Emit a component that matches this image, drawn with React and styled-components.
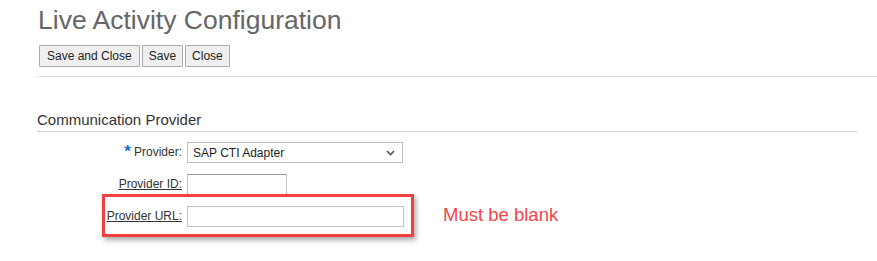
import styled, { createGlobalStyle } from "styled-components";

const GlobalStyle = createGlobalStyle`
  html, body {
    margin: 0;
    padding: 0;
    background: #fff;
  }
  body {
    font-family: "Liberation Sans", Arial, sans-serif;
    color: #333;
  }
`;

const Screen = styled.div`
  width: 877px;
  min-height: 261px;
  overflow: hidden;
`;

const Page = styled.div`
  padding-left: 37px;
  box-sizing: border-box;
`;

const Title = styled.h1`
  margin: 5px 0 0 1px;
  font-size: 26.5px;
  line-height: 31px;
  font-weight: normal;
  color: #666;
`;

const Toolbar = styled.div`
  display: flex;
  gap: 2px;
  margin: 9px 0 0 2px;
`;

const ToolButton = styled.button`
  height: 22px;
  padding: 0 ${p => p.$pad || 6}px;
  font-family: "Liberation Sans", Arial, sans-serif;
  font-size: 12px;
  color: #222;
  background: #efefef;
  border: 1px solid #a9a9a9;
  border-radius: 1px;
  cursor: pointer;
`;

const Divider = styled.hr`
  margin: 9px 0 0 37px;
  border: 0;
  border-top: 1px solid #dedede;
`;

const SectionTitle = styled.h2`
  margin: 34px 20px 0 0;
  padding-bottom: 3px;
  font-size: 15px;
  line-height: 17px;
  font-weight: normal;
  color: #333;
  border-bottom: 1px solid #cfcfcf;
`;

const Form = styled.div`
  display: flex;
  flex-direction: column;
  gap: 11px;
  margin-top: 10px;
  padding-bottom: 40px;
`;

const Row = styled.div`
  position: relative;
  display: grid;
  grid-template-columns: 145px auto auto;
  column-gap: 5px;
  align-items: center;
  justify-content: start;
`;

const Label = styled.label`
  justify-self: end;
  font-size: 12px;
  color: #333;
  text-decoration: ${p => (p.$link ? "underline" : "none")};
  margin-top: -2px;
`;

const Required = styled.span`
  color: #1a73c4;
  font-size: 17px;
  font-weight: bold;
  margin-right: 3px;
  vertical-align: -1px;
`;

const SelectBox = styled.div`
  position: relative;
  width: ${p => p.$w}px;
  height: 21px;
  box-sizing: border-box;
  border: 1px solid #bfbfbf;
  background: #fff;
  display: flex;
  align-items: center;
  padding-left: 5px;
  font-size: 12px;
  color: #222;
`;

const Chevron = styled.svg`
  position: absolute;
  right: 7px;
  top: 7px;
`;

const TextInput = styled.input`
  width: ${p => p.$w}px;
  height: 21px;
  box-sizing: border-box;
  border: 1px solid #c2c2c2;
  border-top-color: ${p => p.$topColor || "#c2c2c2"};
  padding: 0 4px;
  font-family: "Liberation Sans", Arial, sans-serif;
  font-size: 12px;
  outline: none;
`;

const Highlight = styled.div`
  position: absolute;
  left: 65px;
  top: -12px;
  width: 312px;
  height: 43px;
  box-sizing: border-box;
  border: 3px solid #f0403f;
  box-shadow: 2px 3px 5px rgba(0, 0, 0, 0.35);
  pointer-events: none;
`;

const Note = styled.span`
  margin-left: 34px;
  margin-top: -4px;
  font-size: 18.5px;
  color: #f2474a;
`;

export default function App() {
  return (
    <Screen>
      <GlobalStyle />
      <Page>
        <Title>Live Activity Configuration</Title>
        <Toolbar>
          <ToolButton $pad={7}>Save and Close</ToolButton>
          <ToolButton>Save</ToolButton>
          <ToolButton>Close</ToolButton>
        </Toolbar>
      </Page>
      <Divider />
      <Page>
        <SectionTitle>Communication Provider</SectionTitle>
        <Form>
          <Row>
            <Label>
              <Required>*</Required>Provider:
            </Label>
            <SelectBox $w={216}>
              SAP CTI Adapter
              <Chevron width="9" height="6" viewBox="0 0 9 6">
                <path d="M1 1l3.5 3.5L8 1" fill="none" stroke="#555" strokeWidth="1.6" />
              </Chevron>
            </SelectBox>
          </Row>
          <Row>
            <Label $link>Provider ID:</Label>
            <TextInput $w={100} $topColor="#9a9a9a" />
          </Row>
          <Row>
            <Highlight />
            <Label $link>Provider URL:</Label>
            <TextInput $w={217} />
            <Note>Must be blank</Note>
          </Row>
        </Form>
      </Page>
    </Screen>
  );
}
